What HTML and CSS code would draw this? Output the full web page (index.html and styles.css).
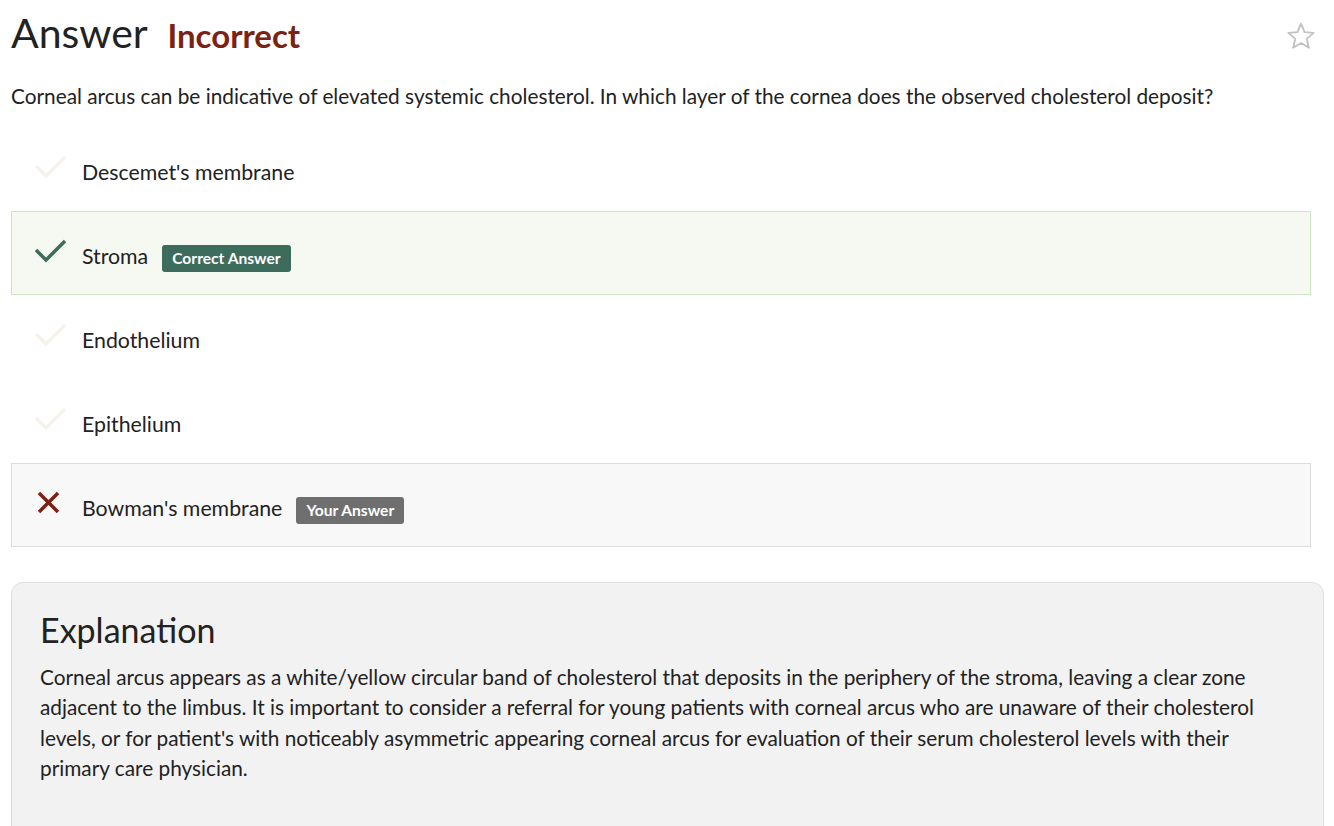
FILE: index.html
```html
<!DOCTYPE html>
<html>
<head>
<meta charset="utf-8">
<link rel="stylesheet" href="styles.css">
</head>
<body>
<div class="page">
  <div class="header">
    <h1 class="title">Answer <span class="status">Incorrect</span></h1>
    <svg class="star" width="32" height="32" viewBox="0 0 24 24"><path d="M12 2L14.65 8.36L21.51 8.91L16.28 13.39L17.88 20.09L12 16.5L6.12 20.09L7.72 13.39L2.49 8.91L9.35 8.36Z" fill="none" stroke="#c2c2c2" stroke-width="1.4" stroke-linejoin="round"/></svg>
  </div>
  <p class="question">Corneal arcus can be indicative of elevated systemic cholesterol. In which layer of the cornea does the observed cholesterol deposit?</p>
  <ul class="options">
    <li class="option">
      <svg class="icon" viewBox="0 0 32 24"><path d="M2 11l10 10L31 2" fill="none" stroke="#f6f2eb" stroke-width="3.5"/></svg>
      <span class="label">Descemet's membrane</span>
    </li>
    <li class="option correct">
      <svg class="icon" viewBox="0 0 32 24"><path d="M2 11l10 10L31 2" fill="none" stroke="#3d6b5c" stroke-width="3.5"/></svg>
      <span class="label">Stroma</span>
      <span class="badge badge-correct">Correct Answer</span>
    </li>
    <li class="option">
      <svg class="icon" viewBox="0 0 32 24"><path d="M2 11l10 10L31 2" fill="none" stroke="#f6f2eb" stroke-width="3.5"/></svg>
      <span class="label">Endothelium</span>
    </li>
    <li class="option">
      <svg class="icon" viewBox="0 0 32 24"><path d="M2 11l10 10L31 2" fill="none" stroke="#f6f2eb" stroke-width="3.5"/></svg>
      <span class="label">Epithelium</span>
    </li>
    <li class="option wrong">
      <svg class="icon" viewBox="0 0 32 24"><path d="M5 2l19 19M24 2L5 21" fill="none" stroke="#7a2314" stroke-width="3.5"/></svg>
      <span class="label">Bowman's membrane</span>
      <span class="badge badge-yours">Your Answer</span>
    </li>
  </ul>
  <div class="explanation">
    <h2 class="exp-title">Explanation</h2>
    <p class="exp-text">Corneal arcus appears as a white/yellow circular band of cholesterol that deposits in the periphery of the stroma, leaving a clear zone adjacent to the limbus. It is important to consider a referral for young patients with corneal arcus who are unaware of their cholesterol levels, or for patient's with noticeably asymmetric appearing corneal arcus for evaluation of their serum cholesterol levels with their primary care physician.</p>
  </div>
</div>
</body>
</html>
```

FILE: styles.css
```css
* { box-sizing: border-box; }
html, body { margin: 0; padding: 0; background: #fff; }
body {
  font-family: Lato, "Open Sans", sans-serif;
  color: #222;
  overflow: hidden;
}
.page {
  padding: 0 10px 0 11px;
}
.header {
  display: flex;
  align-items: center;
  justify-content: space-between;
  height: 64px;
}
.title {
  margin: 0;
  font-size: 41px;
  font-weight: 400;
  color: #222;
}
.status {
  font-size: 33px;
  font-weight: 700;
  color: #7a2314;
  margin-left: 10px;
}
.star {
  margin: 10px 7px 0 0;
}
.question {
  margin: 18px 0 0;
  font-size: 20.8px;
  line-height: 28px;
  color: #222;
}
.options {
  list-style: none;
  margin: 17px 0 0;
  padding: 0;
  width: 1300px;
}
.option {
  display: flex;
  align-items: center;
  height: 84px;
  padding: 0 0 0 22px;
  border: 1px solid transparent;
  font-size: 21.3px;
}
.option.correct {
  background: #f6f9f2;
  border-color: #cfe4c4;
}
.option.wrong {
  background: #f8f8f8;
  border-color: #dcdcdc;
}
.icon {
  width: 32px;
  height: 24px;
  margin-top: -4px;
  flex: none;
}
.label {
  margin: 6px 0 0 16px;
}
.badge {
  margin: 11px 0 0 14px;
  font-size: 15.6px;
  font-weight: 700;
  color: #fff;
  padding: 4px 10px;
  border-radius: 3px;
  line-height: 19px;
}
.badge-correct { background: #3d6b5c; }
.badge-yours { background: #6f6f6f; }
.explanation {
  margin-top: 35px;
  width: 1313px;
  background: #f2f2f2;
  border: 1px solid #dedede;
  border-radius: 12px;
  padding: 26px 58px 40px 28px;
  min-height: 260px;
}
.exp-title {
  margin: 0;
  font-size: 34px;
  font-weight: 400;
  color: #222;
}
.exp-text {
  margin: 12px 0 0;
  font-size: 20.8px;
  line-height: 30.4px;
  color: #222;
}
```
